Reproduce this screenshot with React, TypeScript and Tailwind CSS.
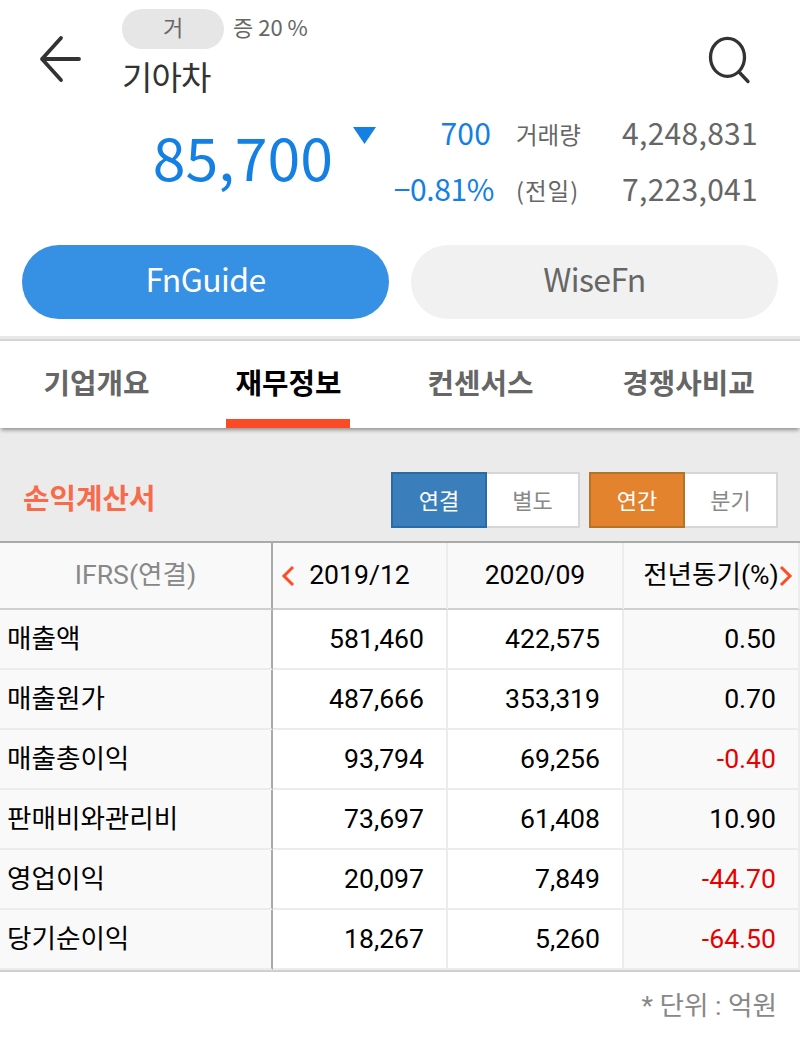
import { useState } from "react";
import clsx from "clsx";

const tabs = ["기업개요", "재무정보", "컨센서스", "경쟁사비교"];
const providers = ["FnGuide", "WiseFn"];

const rows = [
  { label: "매출액", prev: "581,460", current: "422,575", change: "0.50" },
  { label: "매출원가", prev: "487,666", current: "353,319", change: "0.70" },
  { label: "매출총이익", prev: "93,794", current: "69,256", change: "-0.40" },
  { label: "판매비와관리비", prev: "73,697", current: "61,408", change: "10.90" },
  { label: "영업이익", prev: "20,097", current: "7,849", change: "-44.70" },
  { label: "당기순이익", prev: "18,267", current: "5,260", change: "-64.50" },
];

function StockHeader() {
  return (
    <header className="flex h-[100px] items-start pr-[49px] pl-[39px]">
      <button aria-label="back" className="mt-[35px]">
        <svg width="43" height="48" viewBox="0 0 43 48" fill="none" stroke="#333" strokeWidth="3.8" strokeLinecap="round" strokeLinejoin="round">
          <path d="M22 3 3 24l19 21M3 24h37" />
        </svg>
      </button>
      <div className="ml-10 flex-1 pt-[9px]">
        <div className="flex items-center text-[22px] text-[#666]">
          <span className="flex h-10 w-[102px] justify-center rounded-full bg-[#e6e6e6] leading-[34px]">거</span>
          <span className="ml-[9px] h-10 leading-[34px]">증 20 %</span>
        </div>
        <h1 className="text-[33px] leading-[55px] tracking-[-0.8px] text-[#333]">기아차</h1>
      </div>
      <button aria-label="search" className="mt-[35px]">
        <svg width="43" height="50" viewBox="0 0 43 50" fill="none" stroke="#333" strokeWidth="3.3" strokeLinecap="round">
          <ellipse cx="19.5" cy="22.3" rx="17" ry="19" />
          <path d="m31 37 9 9.5" />
        </svg>
      </button>
    </header>
  );
}

function Quote() {
  return (
    <section className="flex h-[130px] text-[#1480e3]">
      <strong className="w-[333px] text-right text-[59px] leading-[111px] font-normal">85,700</strong>
      <svg className="mt-[27px] ml-5" width="23" height="17" viewBox="0 0 23 17">
        <path d="M0 0h23L11.5 17z" fill="currentColor" />
      </svg>
      <div className="w-[118px] pt-1 text-right text-[30px] leading-[56px]">
        <p className="pr-[3px] tracking-[0.2px]">700</p>
        <p className="tracking-[-0.4px]">−0.81%</p>
      </div>
      <div className="w-[110px] pt-1.5 pl-[22px] text-[23.5px] leading-[56px] text-[#666]">
        <p>거래량</p>
        <p className="tracking-[1px]">(전일)</p>
      </div>
      <div className="w-[154px] pt-1 text-right text-[30px] leading-[56px] tracking-[0.3px] text-[#666]">
        <p>4,248,831</p>
        <p>7,223,041</p>
      </div>
    </section>
  );
}

function Toggle({ options, tone }: { options: string[]; tone: "blue" | "orange" }) {
  const [selected, setSelected] = useState(options[0]);

  return (
    <div className="flex h-14 w-[189px] text-[22px] leading-[50px]">
      {options.map((option) => (
        <button
          key={option}
          onClick={() => setSelected(option)}
          className={clsx(
            "border-2 pb-0.5",
            selected !== option && "w-[93px] border-l-0 border-[#d6d6d6] bg-white text-[#888]",
            selected === option && "w-24 text-white",
            selected === option && tone === "blue" && "border-[#2a6ba5] bg-[#3a7ebb]",
            selected === option && tone === "orange" && "border-[#b57328] bg-[#e4832e]",
          )}
        >
          {option}
        </button>
      ))}
    </div>
  );
}

function IncomeTable() {
  const heading = "border-r-2 border-b-2 border-r-[#ececec] border-b-[#d0d0d0] p-0 pb-0.5 font-normal";
  const cell = "border-r-2 border-b-2 border-[#ececec] p-0 pr-[22px] text-right";

  return (
    <table className="w-full table-fixed border-separate border-spacing-0 border-t-2 border-b-2 border-t-[#aaa] border-b-[#d0d0d0] font-[Roboto,'Noto_Sans_CJK_KR',sans-serif] text-[26.6px] leading-[58px] text-black">
      <colgroup>
        <col className="w-[273px]" />
        <col className="w-[175px]" />
        <col className="w-[176px]" />
        <col className="w-[176px]" />
      </colgroup>
      <thead className="bg-[#f9f9f9]">
        <tr className="h-[67px]">
          <th className="border-r-2 border-b-2 border-r-[#aaa] border-b-[#d0d0d0] p-0 pb-0.5 font-normal text-[#888]">IFRS(연결)</th>
          <th className={clsx(heading, "relative")}>
            <svg className="absolute top-[22px] left-[8px]" width="14" height="22" viewBox="0 0 14 22" fill="none" stroke="#ff4b26" strokeWidth="3">
              <path d="M12 2 3 11l9 9" />
            </svg>
            2019/12
          </th>
          <th className={heading}>2020/09</th>
          <th className={clsx(heading, "relative")}>
            전년동기(%)
            <svg className="absolute top-[22px] right-[5px]" width="14" height="22" viewBox="0 0 14 22" fill="none" stroke="#ff4b26" strokeWidth="3">
              <path d="m2 2 9 9-9 9" />
            </svg>
          </th>
        </tr>
      </thead>
      <tbody>
        {rows.map((row) => (
          <tr key={row.label} className="h-[60px]">
            <td className="border-r-2 border-b-2 border-r-[#aaa] border-b-[#ececec] bg-[#f9f9f9] p-0 pl-[7px]">{row.label}</td>
            <td className={cell}>{row.prev}</td>
            <td className={cell}>{row.current}</td>
            <td className={clsx(cell, "bg-[#f9f9f9]", row.change.startsWith("-") && "text-[#e60000]")}>{row.change}</td>
          </tr>
        ))}
      </tbody>
    </table>
  );
}

export default function App() {
  const [provider, setProvider] = useState("FnGuide");
  const [tab, setTab] = useState("재무정보");

  return (
    <main className="h-[1053px] w-[800px] overflow-hidden bg-white font-['Noto_Sans_CJK_KR',sans-serif]">
      <StockHeader />
      <Quote />
      <div className="flex h-[106px] gap-[22px] px-[22px] pt-[15px]">
        {providers.map((item) => (
          <button
            key={item}
            onClick={() => setProvider(item)}
            className={clsx(
              "h-[74px] flex-1 rounded-full pb-2 text-[32px] leading-[66px] tracking-[-0.6px]",
              provider === item ? "bg-[#3690e3] text-white" : "bg-[#f1f1f1] text-[#666]",
            )}
          >
            {item}
          </button>
        ))}
      </div>
      <div className="h-[5px] border-b-2 border-[#d6d6d6] bg-[#e8e8e8]" />
      <div className="bg-[#ebebeb]">
        <nav className="grid h-[87px] grid-cols-[192px_192px_192px_1fr] bg-white shadow-[0_3px_4px_-1px_rgba(0,0,0,0.4)]">
          {tabs.map((item) => (
            <button
              key={item}
              onClick={() => setTab(item)}
              className={clsx(
                "flex flex-col items-center justify-between text-[28.8px] leading-[82px] font-bold",
                tab === item ? "text-black" : "text-[#666]",
              )}
            >
              <span className="h-[78px] pl-px">{item}</span>
              {tab === item ? <span className="h-[9px] w-[124px] bg-[#fa4b26]" /> : null}
            </button>
          ))}
        </nav>
        <div className="flex h-[113px] items-start pt-11 pr-[22px] pl-[23px]">
          <h2 className="flex-1 text-[28.8px] leading-[50px] font-bold text-[#f76b4c]">손익계산서</h2>
          <div className="flex gap-[9px]">
            <Toggle options={["연결", "별도"]} tone="blue" />
            <Toggle options={["연간", "분기"]} tone="orange" />
          </div>
        </div>
      </div>
      <IncomeTable />
      <p className="pt-1 pr-[23px] text-right font-[Roboto,'Noto_Sans_CJK_KR',sans-serif] text-[26.6px] leading-[59px] text-[#888]">* 단위 : 억원</p>
    </main>
  );
}
